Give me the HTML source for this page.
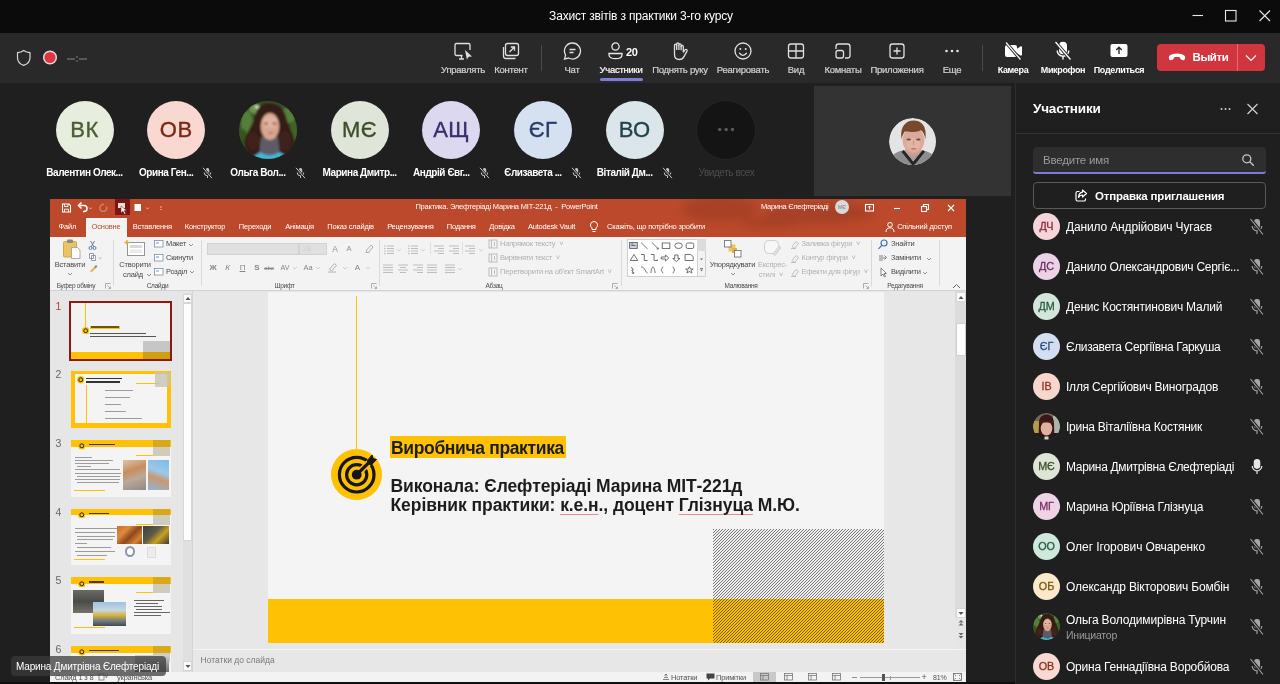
<!DOCTYPE html>
<html lang="ru">
<head>
<meta charset="utf-8">
<title>Захист звітів з практики 3-го курсу</title>
<style>
*{box-sizing:border-box;margin:0;padding:0}
html,body{width:1280px;height:684px;overflow:hidden;background:#1f1f1f;font-family:"Liberation Sans",sans-serif;color:#fff}
.abs{position:absolute}
body{opacity:.9999}
#titlebar{left:0;top:0;width:1280px;height:33px;background:#0b0b0b}
#titlebar .t{position:absolute;left:1px;width:1280px;top:9px;text-align:center;font-size:12px;color:#fff;letter-spacing:-0.180px}
#toolbar{left:0;top:33px;width:1280px;height:50px;background:#292929}
.tb{position:absolute;top:0;width:0;height:50px;text-align:center;font-size:9.500px;color:#d2d2d2;white-space:nowrap;letter-spacing:-0.250px}
.tb span{position:absolute;left:-40px;right:-40px;top:30.500px;text-align:center;-webkit-text-stroke:.2px}
.tb svg{position:absolute;left:50%;top:7px;margin-left:-11px}
.tb.w{color:#fff;font-weight:bold;font-size:9px;letter-spacing:-0.350px}
.tb.w span{top:31.500px;-webkit-text-stroke:0}
#strip{left:0;top:83px;width:1015px;height:116px;background:#1f1f1f}
.av{position:absolute;top:17.500px;width:58px;height:58px;border-radius:50%;text-align:center;line-height:58px;font-size:22px;letter-spacing:.5px;-webkit-text-stroke:.35px}
.nm{position:absolute;top:82px;width:120px;height:16px;line-height:16px;text-align:center;font-size:10px;color:#fff;white-space:nowrap;letter-spacing:-0.430px}
.nm .m{display:inline-block;vertical-align:middle;margin-left:9px;margin-top:-1px}
#panel{left:1015px;top:83px;width:265px;height:601px;background:#1f1f1f;border-left:1px solid #2e2e2e}
.row{position:absolute;left:0;width:265px;height:40px}
.row .a{position:absolute;left:17px;top:6.500px;width:27px;height:27px;border-radius:50%;font-size:10.800px;line-height:27px;text-align:center;letter-spacing:-0.100px;-webkit-text-stroke:.3px}
.row .n{position:absolute;left:50px;font-size:12px;color:#fff;white-space:nowrap;letter-spacing:-0.170px}
.row>svg{position:absolute;left:233px;top:11px}
#ppt{left:50px;top:199px;width:916px;height:483px;background:#e6e6e6;overflow:hidden;font-size:9px;color:#444}
#ppt .t{white-space:nowrap;line-height:14px;height:14px}
#ppt .c{text-align:center}
.th i{position:absolute;display:block}
.st{font-size:17.500px;font-weight:bold;color:#1c1c1c;white-space:nowrap;letter-spacing:-0.070px;line-height:20px}
.st u{text-decoration:underline;text-decoration-color:#e88c8c;text-decoration-thickness:.8px;text-underline-offset:2.500px}
</style>
</head>
<body>
<div id="titlebar" class="abs"><div class="t">Захист звітів з практики 3-го курсу</div></div>
<!-- window controls -->
<svg class="abs" style="left:1180px;top:0" width="100" height="33" viewBox="0 0 100 33" fill="none" stroke="#e8e8e8" stroke-width="1.1">
<path d="M12.5 15.5h10.5"/><rect x="45.5" y="10.5" width="10.5" height="10.5"/><path d="M79.5 10.5l10.5 10.5M90 10.5l-10.5 10.5"/></svg>
<div id="toolbar" class="abs">
<svg class="abs" style="left:14px;top:14px" width="80" height="22" viewBox="0 0 80 22" fill="none">
<path d="M9.7 3.6c2 1.4 4 2 6.3 2.1v5c0 3.600-2.300 6.300-6.300 7.700C5.800 17 3.500 14.300 3.500 10.700v-5c2.300-.1 4.300-.7 6.200-2.100z" stroke="#d8d8d8" stroke-width="1.200"/>
<circle cx="36" cy="10.500" r="6.300" fill="#e0353f" stroke="#dcdcdc" stroke-width="1.500"/>
<path d="M53 12h8M65 12h8" stroke="#8a8a8a" stroke-width="1.200"/><circle cx="63" cy="10" r=".8" fill="#8a8a8a"/><circle cx="63" cy="14" r=".8" fill="#8a8a8a"/>
</svg>
<div class="tb" style="left:463px"><svg width="22" height="22" viewBox="0 0 22 22" fill="none" stroke="#e0e0e0" stroke-width="1.300"><path d="M10.500 15.500H4.500a1.500 1.500 0 0 1-1.500-1.500V5a1.500 1.500 0 0 1 1.500-1.500h12A1.500 1.500 0 0 1 18 5v5"/><path d="M7 19h5M9.500 15.500V19"/><path d="M13 10l7 6.500-3.300.2-1.800 2.800z" fill="#e0e0e0" stroke="none"/></svg><span>Управлять</span></div>
<div class="tb" style="left:511px"><svg width="22" height="22" viewBox="0 0 22 22" fill="none" stroke="#e0e0e0" stroke-width="1.300"><rect x="5.500" y="3.500" width="13" height="12" rx="2"/><path d="M3.500 7v9a2.500 2.500 0 0 0 2.500 2.500h9.500"/><path d="M9.500 12l5-5M10.800 7h3.700v3.700"/></svg><span>Контент</span></div>
<div class="abs" style="left:541px;top:12px;width:1px;height:26px;background:#4a4a4a"></div>
<div class="tb" style="left:572px"><svg width="22" height="22" viewBox="0 0 22 22" fill="none" stroke="#e0e0e0" stroke-width="1.300"><path d="M11.500 3a8 8 0 1 1-3.900 15l-4.100 1 1.100-3.900A8 8 0 0 1 11.500 3z"/><path d="M8.500 9.500h6M8.500 12.500h4"/></svg><span>Чат</span></div>
<div class="tb" style="left:621px;color:#fff"><svg style="margin-left:-15px" width="32" height="22" viewBox="0 0 32 22" fill="none" stroke="#e8e8e8" stroke-width="1.300"><circle cx="9.500" cy="6.500" r="3.600"/><path d="M3 13.500h13v1.200c0 2.500-2.800 4-6.500 4S3 17.200 3 14.700z"/><text x="20" y="15.500" font-size="11" font-weight="bold" fill="#fff" stroke="none" font-family="Liberation Sans, sans-serif">20</text></svg><span>Участники</span></div>
<div class="abs" style="left:600px;top:45px;width:43px;height:3px;background:#7b7fd9;border-radius:1.500px"></div>
<div class="tb" style="left:680px"><svg style="margin-left:-13px" width="22" height="22" viewBox="0 0 22 22" fill="none" stroke="#e0e0e0" stroke-width="1.300" stroke-linejoin="round"><path d="M7.500 11V5.200a1.100 1.100 0 0 1 2.200 0V4a1.100 1.100 0 0 1 2.200 0v1a1.100 1.100 0 0 1 2.200 0v1.500a1.100 1.100 0 0 1 2.200 0V12l1.700-2.200a1.200 1.200 0 0 1 2 1.300l-3 5.500c-1 1.900-2.500 2.900-4.700 2.900-3 0-4.800-2-4.800-5z"/><path d="M9.700 5v5M11.900 5v5M14.100 6v4.200"/></svg><span>Поднять руку</span></div>
<div class="tb" style="left:743px"><svg width="22" height="22" viewBox="0 0 22 22" fill="none" stroke="#e0e0e0" stroke-width="1.300"><circle cx="11" cy="11" r="8"/><path d="M7.500 13.200c1 1.500 2.100 2.100 3.500 2.100s2.500-.6 3.500-2.100" stroke-linecap="round"/><circle cx="8.300" cy="9" r="1" fill="#e0e0e0" stroke="none"/><circle cx="13.700" cy="9" r="1" fill="#e0e0e0" stroke="none"/></svg><span>Реагировать</span></div>
<div class="tb" style="left:796px"><svg width="22" height="22" viewBox="0 0 22 22" fill="none" stroke="#e0e0e0" stroke-width="1.300"><rect x="3.500" y="4" width="15" height="14" rx="2.500"/><path d="M11 4v14M3.500 11h15"/></svg><span>Вид</span></div>
<div class="tb" style="left:843px"><svg width="22" height="22" viewBox="0 0 22 22" fill="none" stroke="#e0e0e0" stroke-width="1.300"><path d="M4 9V6.500A2.500 2.500 0 0 1 6.500 4h9A2.500 2.500 0 0 1 18 6.500v9a2.500 2.500 0 0 1-2.500 2.500H13"/><rect x="4" y="10.500" width="7.500" height="7.500" rx="2"/></svg><span>Комнаты</span></div>
<div class="tb" style="left:897px"><svg width="22" height="22" viewBox="0 0 22 22" fill="none" stroke="#e0e0e0" stroke-width="1.300"><rect x="4" y="4" width="14" height="14" rx="2.500"/><path d="M11 7.500v7M7.500 11h7"/></svg><span>Приложения</span></div>
<div class="tb" style="left:952px"><svg width="22" height="22" viewBox="0 0 22 22" fill="#e0e0e0"><circle cx="5.500" cy="11" r="1.300"/><circle cx="11" cy="11" r="1.300"/><circle cx="16.500" cy="11" r="1.300"/></svg><span>Еще</span></div>
<div class="abs" style="left:982px;top:12px;width:1px;height:26px;background:#4a4a4a"></div>
<div class="tb w" style="left:1013px"><svg width="22" height="22" viewBox="0 0 22 22" fill="#fff"><path d="M3 7a2 2 0 0 1 2-2h8a2 2 0 0 1 2 2v1.800l3.400-2.300c.7-.4 1.600 0 1.600.9v7.200c0 .9-.9 1.300-1.600.9L15 13.200V15a2 2 0 0 1-2 2H5a2 2 0 0 1-2-2z"/><path d="M4 2.500l14.500 17" stroke="#292929" stroke-width="3"/><path d="M4 2.500l14.500 17" stroke="#fff" stroke-width="1.200"/></svg><span>Камера</span></div>
<div class="tb w" style="left:1063px"><svg width="22" height="22" viewBox="0 0 22 22" fill="none" stroke="#fff" stroke-width="1.400"><rect x="7.700" y="2.500" width="6.600" height="11" rx="3.300" fill="#fff"/><path d="M5.200 10.500a5.800 5.800 0 0 0 11.600 0M11 16.300v3.200"/><path d="M3.500 2l15 17.500" stroke="#292929" stroke-width="3.400"/><path d="M3.500 2l15 17.500" stroke="#fff" stroke-width="1.300"/></svg><span>Микрофон</span></div>
<div class="tb w" style="left:1119px"><svg width="22" height="22" viewBox="0 0 22 22"><rect x="2.500" y="4" width="17" height="13" rx="2" fill="#fff"/><path d="M11 14V7.500M8.200 10l2.800-2.800 2.800 2.800" fill="none" stroke="#292929" stroke-width="1.400"/></svg><span>Поделиться</span></div>
<div class="abs" style="left:1157px;top:11px;width:108px;height:27px;background:#d1363f;border-radius:4px">
<div class="abs" style="left:80px;top:0;width:1px;height:27px;background:#e26a70"></div>
<svg class="abs" style="left:11px;top:7px" width="18" height="13" viewBox="0 0 18 13" fill="#fff"><path d="M9 2.500c-3.500 0-6.500 1-7.800 2.600-.5.700-.5 1.600-.2 2.500l.3.900c.2.600.9.900 1.500.7l2-.6c.6-.2 1-.7 1-1.300V6.500c1-.4 2-.5 3.200-.5s2.200.1 3.200.5v.8c0 .6.400 1.100 1 1.300l2 .6c.6.200 1.300-.1 1.500-.7l.3-.9c.3-.9.300-1.800-.2-2.500C15.500 3.500 12.500 2.500 9 2.500z"/></svg>
<div class="abs" style="left:35.500px;top:6.500px;font-size:11.500px;font-weight:bold;color:#fff;letter-spacing:-0.400px">Выйти</div>
<svg class="abs" style="left:87px;top:8px" width="14" height="12" viewBox="0 0 14 12" fill="none" stroke="#fff" stroke-width="1.200"><path d="M2 3.500l5 5 5-5"/></svg>
</div>
</div>
<div id="strip" class="abs">
<div class="av" style="left:55.5px;background:#e7eedd;color:#4a5e31">ВК</div>
<div class="nm" style="left:24.5px"><b>Валентин Олек...</b></div>
<div class="av" style="left:147.2px;background:#f8d8d0;color:#7c2712">ОВ</div>
<div class="nm" style="left:116.2px"><b>Орина Ген...</b><svg class="m" width="11" height="12" viewBox="0 0 11 12" fill="none" stroke="#c8c8c8" stroke-width="1"><rect x="3.800" y="1" width="3.400" height="6" rx="1.700" fill="#c8c8c8" stroke="none"/><path d="M2.200 5.500a3.300 3.300 0 0 0 6.600 0M5.500 9v2"/><path d="M1 .8l9 10.400" stroke="#1f1f1f" stroke-width="2.400"/><path d="M1 .8l9 10.400"/></svg></div>
<div class="av" id="ph1" style="left:238.9px"><svg width="100%" height="100%" viewBox="0 0 58 58" style="display:block"><defs><filter id="bl1" x="-20%" y="-20%" width="140%" height="140%"><feGaussianBlur stdDeviation=".8"/></filter><clipPath id="cc1"><circle cx="29" cy="29" r="29"/></clipPath></defs><g clip-path="url(#cc1)"><rect width="58" height="58" fill="#38532a"/><g filter="url(#bl1)"><ellipse cx="8" cy="22" rx="6" ry="12" fill="#557f38"/><ellipse cx="16" cy="8" rx="6" ry="5" fill="#6f9650"/><ellipse cx="18" cy="6" rx="2" ry="2" fill="#cfe0c0"/><ellipse cx="4" cy="36" rx="4" ry="8" fill="#35551f"/><ellipse cx="50" cy="14" rx="7" ry="8" fill="#55803a"/><ellipse cx="55" cy="30" rx="4" ry="10" fill="#3f6327"/><path d="M30 2c-8 0-12 5-14 13-2 8-7 14-10 23-2 7 2 15 8 18h31c7-3 12-10 10-18-2-9-6-14-8-22C45 7 38 2 30 2z" fill="#341b13"/><ellipse cx="14" cy="40" rx="6" ry="9" fill="#41241a"/><ellipse cx="46" cy="40" rx="6" ry="10" fill="#41231a"/><path d="M22 36h17l2 18H20z" fill="#5d5c66"/><path d="M13 59c2-5 7-7.500 9.500-7.500 3 3.500 13 3.500 16.500 0 4 0 8 2.500 9.500 7.500z" fill="#3fb7d4"/><ellipse cx="31" cy="25.500" rx="9.300" ry="13.500" fill="#d9a590"/><ellipse cx="31" cy="21" rx="8" ry="6" fill="#e2b39f"/><ellipse cx="27" cy="22.500" rx="2" ry=".9" fill="#6b4034"/><ellipse cx="35.500" cy="22.500" rx="2" ry=".9" fill="#6b4034"/><ellipse cx="31.500" cy="32" rx="2.500" ry="1" fill="#b8705f"/></g></g></svg></div>
<div class="nm" style="left:207.9px"><b>Ольга Вол...</b><svg class="m" width="11" height="12" viewBox="0 0 11 12" fill="none" stroke="#c8c8c8" stroke-width="1"><rect x="3.800" y="1" width="3.400" height="6" rx="1.700" fill="#c8c8c8" stroke="none"/><path d="M2.200 5.500a3.300 3.300 0 0 0 6.600 0M5.500 9v2"/><path d="M1 .8l9 10.400" stroke="#1f1f1f" stroke-width="2.400"/><path d="M1 .8l9 10.400"/></svg></div>
<div class="av" style="left:330.6px;background:#dfe5d8;color:#3b4f28">МЄ</div>
<div class="nm" style="left:299.6px"><b>Марина Дмитр...</b></div>
<div class="av" style="left:422.3px;background:#dcd8ef;color:#38306e">АЩ</div>
<div class="nm" style="left:391.3px"><b>Андрій Євг...</b><svg class="m" width="11" height="12" viewBox="0 0 11 12" fill="none" stroke="#c8c8c8" stroke-width="1"><rect x="3.800" y="1" width="3.400" height="6" rx="1.700" fill="#c8c8c8" stroke="none"/><path d="M2.200 5.500a3.300 3.300 0 0 0 6.600 0M5.500 9v2"/><path d="M1 .8l9 10.400" stroke="#1f1f1f" stroke-width="2.400"/><path d="M1 .8l9 10.400"/></svg></div>
<div class="av" style="left:514.0px;background:#d5e0f0;color:#253d69">ЄГ</div>
<div class="nm" style="left:483.0px"><b>Єлизавета ...</b><svg class="m" width="11" height="12" viewBox="0 0 11 12" fill="none" stroke="#c8c8c8" stroke-width="1"><rect x="3.800" y="1" width="3.400" height="6" rx="1.700" fill="#c8c8c8" stroke="none"/><path d="M2.200 5.500a3.300 3.300 0 0 0 6.600 0M5.500 9v2"/><path d="M1 .8l9 10.400" stroke="#1f1f1f" stroke-width="2.400"/><path d="M1 .8l9 10.400"/></svg></div>
<div class="av" style="left:605.7px;background:#dbe6ea;color:#23424d">ВО</div>
<div class="nm" style="left:574.7px"><b>Віталій Дм...</b><svg class="m" width="11" height="12" viewBox="0 0 11 12" fill="none" stroke="#c8c8c8" stroke-width="1"><rect x="3.800" y="1" width="3.400" height="6" rx="1.700" fill="#c8c8c8" stroke="none"/><path d="M2.200 5.500a3.300 3.300 0 0 0 6.600 0M5.500 9v2"/><path d="M1 .8l9 10.400" stroke="#1f1f1f" stroke-width="2.400"/><path d="M1 .8l9 10.400"/></svg></div>
<div class="av" style="left:697.4px;background:#141414;box-shadow:0 0 0 1px #262626;color:#5e5e5e;font-size:11px;letter-spacing:2.500px;line-height:57px;text-indent:2px">•••</div>
<div class="nm" style="left:666.4px;color:#4d4d4d;font-weight:normal">Увидеть всех</div>
<div class="abs" style="left:814px;top:2.500px;width:197px;height:110px;background:#333"></div>
<div class="abs" id="ph2" style="left:888.500px;top:34.500px;width:47.500px;height:47.500px;border-radius:50%;overflow:hidden"><svg width="100%" height="100%" viewBox="0 0 47 47" style="display:block"><defs><filter id="bl2" x="-20%" y="-20%" width="140%" height="140%"><feGaussianBlur stdDeviation=".65"/></filter><clipPath id="cc2"><circle cx="23.500" cy="23.500" r="23.500"/></clipPath></defs><g clip-path="url(#cc2)"><rect width="47" height="47" fill="#e4e4e4"/><g filter="url(#bl2)"><path d="M-2 50c0-10 6-15 14-17.500h23c9 2.500 14 7.500 14 17.500z" fill="#8b8d8f"/><path d="M16 30h16v8l-8 5-8-5z" fill="#cf9d8d"/><path d="M13.500 32.500l10.500 13 10.500-13" fill="none" stroke="#24262b" stroke-width="3"/><path d="M19 36l5 7 5-7-5 2z" fill="#9ea0a3"/><ellipse cx="24.200" cy="22" rx="10.800" ry="12.500" fill="#dcaa9a"/><ellipse cx="24.200" cy="26" rx="7" ry="6" fill="#e2b4a4"/><path d="M12.300 21C10.500 8 17 2.500 24.500 2.500S38 8 36 21c-.8-5-2.500-8-4.500-9-5 2.500-13 2-15.500 1.200-2 2-3 5-3.700 7.800z" fill="#794a2f"/><ellipse cx="19.500" cy="21.300" rx="2.200" ry=".9" fill="#6d4a40"/><ellipse cx="29" cy="21.300" rx="2.200" ry=".9" fill="#6d4a40"/><ellipse cx="24.300" cy="30.500" rx="3" ry=".8" fill="#b5786c"/><path d="M24.300 22v5" stroke="#c99585" stroke-width="1.200"/></g></g></svg></div>
</div>
<div id="ppt" class="abs">
<div class="abs" style="left:0px;top:0px;width:916px;height:37.5px;background:#bc492b"></div>
<svg class="abs" style="left:620px;top:0" width="240" height="37" viewBox="0 0 240 37"><defs><filter id="cl" x="-20%" y="-50%" width="140%" height="200%"><feGaussianBlur stdDeviation="4"/></filter></defs><g filter="url(#cl)" fill="#000" opacity=".1"><ellipse cx="50" cy="10" rx="38" ry="13"/><ellipse cx="150" cy="14" rx="55" ry="11"/><ellipse cx="100" cy="24" rx="30" ry="6"/></g></svg>
<div class="abs" style="left:64.6px;top:0px;width:15.4px;height:16px;background:#7a1710"></div>
<svg class="abs" style="left:10px;top:.5px" width="110" height="16" viewBox="0 0 110 16" fill="none" stroke="#fff" stroke-width="1.100"><path d="M2.500 4h6.500l1.500 1.500v6.500h-8z"/><path d="M4.500 4v2.500h3.500v-2.500M4.500 12v-2.800h4v2.800" stroke-width=".9"/><path d="M20 5.500h4a3 3 0 0 1 0 6h-1" stroke-width="1.500"/><path d="M21.500 2.500l-3 3 3 3" stroke-width="1.500"/><path d="M29 7.500l1.500 1.500 1.500-1.500" stroke-width=".8" opacity=".7"/><path d="M44 4.500a3.500 3.500 0 1 0 2.500 2" opacity=".35" stroke-width="1.300"/><rect x="58" y="3" width="7" height="5" fill="#fff" stroke="none" opacity=".85"/><path d="M61 6l0 7 2-1.800 1.500 3 1.200-.6-1.500-3h2.600z" fill="#fff" stroke="#7d1d12" stroke-width=".5"/><rect x="74.500" y="4" width="6.500" height="7" fill="#fff" stroke="none"/><path d="M86 7.500l1.500 1.500 1.500-1.500" stroke-width=".8" opacity=".7"/><path d="M100 7h2M100.500 9l.5.800.5-.8" stroke-width=".8" opacity=".8"/></svg>
<div class="abs t c" style="left:356.5px;top:1px;width:200px;color:#fff;font-size:7.500px;letter-spacing:-0.200px">Практика. Элефтеріаді Марина МІТ-221д&nbsp; -&nbsp; PowerPoint</div>
<div class="abs t" style="left:711px;top:1px;color:#fff;font-size:7.500px;letter-spacing:-0.300px">Марина Єлефтеріаді</div>
<div class="abs" style="left:785px;top:1px;width:14px;height:14px;border-radius:50%;background:#d9d9d9;color:#777;font-size:5px;line-height:14px;text-align:center">МЄ</div>
<svg class="abs" style="left:812px;top:2px" width="100" height="14" viewBox="0 0 100 14" fill="none" stroke="#fff" stroke-width="1.100"><rect x="3.500" y="3.500" width="8" height="6.500"/><path d="M7.500 8.500v-3.500M6 6.500l1.500-1.500 1.500 1.500" stroke-width=".9"/><path d="M32 7.500h6"/><rect x="59.500" y="5.500" width="5" height="5"/><path d="M61.500 5.500v-2h5v5h-2"/><path d="M86 4l6 6M92 4l-6 6"/></svg>
<div class="abs" style="left:36.2px;top:19.3px;width:40.5px;height:19px;background:#f3f3f3"></div>
<div class="abs t c" style="left:-82.7px;top:21.3px;width:200px;color:#fff;font-size:7.500px;letter-spacing:-0.200px">Файл</div>
<div class="abs t c" style="left:-44px;top:21.3px;width:200px;color:#bc492b;font-size:7.500px;letter-spacing:-0.200px">Основне</div>
<div class="abs t c" style="left:2.3px;top:21.3px;width:200px;color:#fff;font-size:7.500px;letter-spacing:-0.200px">Вставлення</div>
<div class="abs t c" style="left:55px;top:21.3px;width:200px;color:#fff;font-size:7.500px;letter-spacing:-0.200px">Конструктор</div>
<div class="abs t c" style="left:105px;top:21.3px;width:200px;color:#fff;font-size:7.500px;letter-spacing:-0.200px">Переходи</div>
<div class="abs t c" style="left:149.5px;top:21.3px;width:200px;color:#fff;font-size:7.500px;letter-spacing:-0.200px">Анімація</div>
<div class="abs t c" style="left:200.6px;top:21.3px;width:200px;color:#fff;font-size:7.500px;letter-spacing:-0.200px">Показ слайдів</div>
<div class="abs t c" style="left:260.4px;top:21.3px;width:200px;color:#fff;font-size:7.500px;letter-spacing:-0.200px">Рецензування</div>
<div class="abs t c" style="left:311.3px;top:21.3px;width:200px;color:#fff;font-size:7.500px;letter-spacing:-0.200px">Подання</div>
<div class="abs t c" style="left:352px;top:21.3px;width:200px;color:#fff;font-size:7.500px;letter-spacing:-0.200px">Довідка</div>
<div class="abs t c" style="left:401.5px;top:21.3px;width:200px;color:#fff;font-size:7.500px;letter-spacing:-0.200px">Autodesk Vault</div>
<div class="abs t c" style="left:506px;top:21.3px;width:200px;color:#fff;font-size:7.500px;letter-spacing:-0.200px">Скажіть, що потрібно зробити</div>
<div class="abs t c" style="left:774.5px;top:21.3px;width:200px;color:#fff;font-size:7.500px;letter-spacing:-0.200px">Спільний доступ</div>
<svg class="abs" style="left:538px;top:21px" width="12" height="14" viewBox="0 0 12 14" fill="none" stroke="#fff" stroke-width="1"><path d="M6 1.500a3.500 3.500 0 0 1 2 6.400V9.500H4V7.900a3.500 3.500 0 0 1 2-6.400zM4.500 11.500h3"/></svg>
<svg class="abs" style="left:834px;top:22px" width="12" height="12" viewBox="0 0 12 12" fill="none" stroke="#fff" stroke-width="1"><circle cx="6" cy="3.800" r="2.300"/><path d="M2 11c0-3 1.500-4.200 4-4.200s4 1.200 4 4.200"/></svg>
<div class="abs" style="left:0px;top:37.5px;width:916px;height:54px;background:#f3f3f3;border-bottom:1px solid #d2d2d2"></div>
<div class="abs" style="left:63px;top:41px;width:1px;height:46px;background:#dadada"></div>
<div class="abs" style="left:151px;top:41px;width:1px;height:46px;background:#dadada"></div>
<div class="abs" style="left:329px;top:41px;width:1px;height:46px;background:#dadada"></div>
<div class="abs" style="left:571px;top:41px;width:1px;height:46px;background:#dadada"></div>
<div class="abs" style="left:821px;top:41px;width:1px;height:46px;background:#dadada"></div>
<div class="abs" style="left:889px;top:41px;width:1px;height:46px;background:#dadada"></div>
<div class="abs t c" style="left:-74px;top:80.2px;width:200px;color:#4a4a4a;font-size:6.500px;letter-spacing:-0.250px">Буфер обміну</div>
<div class="abs t c" style="left:7.5px;top:80.2px;width:200px;color:#4a4a4a;font-size:6.500px;letter-spacing:-0.250px">Слайди</div>
<div class="abs t c" style="left:134.5px;top:80.2px;width:200px;color:#4a4a4a;font-size:6.500px;letter-spacing:-0.250px">Шрифт</div>
<div class="abs t c" style="left:344px;top:80.2px;width:200px;color:#4a4a4a;font-size:6.500px;letter-spacing:-0.250px">Абзац</div>
<div class="abs t c" style="left:591px;top:80.2px;width:200px;color:#4a4a4a;font-size:6.500px;letter-spacing:-0.250px">Малювання</div>
<div class="abs t c" style="left:755px;top:80.2px;width:200px;color:#4a4a4a;font-size:6.500px;letter-spacing:-0.250px">Редагування</div>
<svg class="abs" style="left:55px;top:84px" width="6" height="6" viewBox="0 0 6 6" fill="none" stroke="#9a9a9a" stroke-width=".8"><path d="M.5 .5h-0v5M.5.500h5M2.500 2.500l3 3M5.500 3.500v2h-2"/></svg>
<svg class="abs" style="left:321px;top:84px" width="6" height="6" viewBox="0 0 6 6" fill="none" stroke="#9a9a9a" stroke-width=".8"><path d="M.5 .5h-0v5M.5.500h5M2.500 2.500l3 3M5.500 3.500v2h-2"/></svg>
<svg class="abs" style="left:562px;top:84px" width="6" height="6" viewBox="0 0 6 6" fill="none" stroke="#9a9a9a" stroke-width=".8"><path d="M.5 .5h-0v5M.5.500h5M2.500 2.500l3 3M5.500 3.500v2h-2"/></svg>
<svg class="abs" style="left:813px;top:84px" width="6" height="6" viewBox="0 0 6 6" fill="none" stroke="#9a9a9a" stroke-width=".8"><path d="M.5 .5h-0v5M.5.500h5M2.500 2.500l3 3M5.500 3.500v2h-2"/></svg>
<svg class="abs" style="left:10px;top:39px" width="44" height="40" viewBox="0 0 44 40" fill="none"><rect x="3.500" y="3.500" width="13" height="15.500" rx="1" fill="#ecc263" stroke="#d9a441"/><rect x="7" y="1.500" width="6" height="3.500" rx="1" fill="#8a8a8a"/><path d="M11.500 9.500h6l2.500 2.500v8.500h-8.500z" fill="#fff" stroke="#9a9a9a" stroke-width=".8"/><g stroke="#5b7fa8" stroke-width="1"><circle cx="30.500" cy="10" r="1.500"/><circle cx="34.500" cy="10" r="1.500"/><path d="M30.500 3l3.500 6M34.500 3l-3.500 6"/></g><path d="M29.500 15.500h4v5h-4zM31.500 17.500h4v5h-4z" fill="#fff" stroke="#7a8a9a" stroke-width=".8"/><path d="M39 19.500l1.200 1.200 1.200-1.200" stroke="#888" stroke-width=".7"/><path d="M30 33l4-4 1.500 1.500-4 4z" fill="#e6b94a"/><path d="M34 29l2-2 1.500 1.500-2 2z" fill="#888"/></svg>
<div class="abs t c" style="left:-80px;top:58.7px;width:200px;color:#4a4a4a;font-size:7.500px;letter-spacing:-0.200px">Вставити</div>
<svg class="abs" style="left:17px;top:73px" width="6" height="4" viewBox="0 0 6 4" fill="none" stroke="#777" stroke-width=".8"><path d="M1 1l2 2 2-2"/></svg>
<svg class="abs" style="left:74px;top:40px" width="24" height="20" viewBox="0 0 24 20" fill="none"><rect x="3.500" y="3.500" width="17" height="13" fill="#fff" stroke="#8a8a8a" stroke-width=".9"/><rect x="6" y="6" width="12" height="3" fill="#d9d9d9"/><rect x="6" y="10.500" width="12" height="3.500" fill="#e9e9e9"/><path d="M3 1v5M.5 3.500h5" stroke="#e0a92e" stroke-width="1.300"/></svg>
<div class="abs t c" style="left:-15px;top:58.7px;width:200px;color:#4a4a4a;font-size:7.500px;letter-spacing:-0.200px">Створити</div>
<div class="abs t c" style="left:-17px;top:68.5px;width:200px;color:#4a4a4a;font-size:7.500px;letter-spacing:-0.200px">слайд</div>
<svg class="abs" style="left:96px;top:74px" width="6" height="4" viewBox="0 0 6 4" fill="none" stroke="#777" stroke-width=".8"><path d="M1 1l2 2 2-2"/></svg>
<svg class="abs" style="left:103px;top:40px" width="11" height="10" viewBox="0 0 11 10" fill="none"><rect x="1.500" y="1.500" width="8.500" height="6.500" fill="#fff" stroke="#7a8fa8" stroke-width=".8"/><rect x="3" y="3" width="3" height="2" fill="#b9c8da"/></svg>
<div class="abs t" style="left:116px;top:38px;color:#4a4a4a;font-size:7.500px;letter-spacing:-0.200px">Макет</div>
<svg class="abs" style="left:103px;top:54px" width="11" height="10" viewBox="0 0 11 10" fill="none"><rect x="1.500" y="1.500" width="8.500" height="6.500" fill="#fff" stroke="#7a8fa8" stroke-width=".8"/><rect x="3" y="3" width="3" height="2" fill="#b9c8da"/></svg>
<div class="abs t" style="left:116px;top:52px;color:#4a4a4a;font-size:7.500px;letter-spacing:-0.200px">Скинути</div>
<svg class="abs" style="left:103px;top:67.69999999999999px" width="11" height="10" viewBox="0 0 11 10" fill="none"><rect x="1.500" y="1.500" width="8.500" height="6.500" fill="#fff" stroke="#7a8fa8" stroke-width=".8"/><rect x="3" y="3" width="3" height="2" fill="#b9c8da"/></svg>
<div class="abs t" style="left:116px;top:65.7px;color:#4a4a4a;font-size:7.500px;letter-spacing:-0.200px">Розділ</div>
<svg class="abs" style="left:138px;top:43.5px" width="6" height="4" viewBox="0 0 6 4" fill="none" stroke="#777" stroke-width=".8"><path d="M1 1l2 2 2-2"/></svg>
<svg class="abs" style="left:138.5px;top:71px" width="6" height="4" viewBox="0 0 6 4" fill="none" stroke="#777" stroke-width=".8"><path d="M1 1l2 2 2-2"/></svg>
<div class="abs" style="left:157px;top:43.5px;width:92px;height:12.5px;background:#e0e0e0;border:1px solid #d2d2d2"></div>
<div class="abs" style="left:249px;top:43.5px;width:27.5px;height:12.5px;background:#e0e0e0;border:1px solid #d2d2d2"></div>
<div class="abs t" style="left:253px;top:43px;color:#cfcfcf;font-size:7px">28</div>
<div class="abs t c" style="left:185px;top:42.5px;width:200px;color:#909090;font-size:8.500px">A</div>
<div class="abs t c" style="left:199px;top:43px;width:200px;color:#909090;font-size:7.500px">A</div>
<svg class="abs" style="left:314px;top:44px" width="11" height="11" viewBox="0 0 11 11" fill="none" stroke="#b0b0b0" stroke-width="1"><path d="M2 8l5-6 2 2-5 6zM1.500 9.500h4"/></svg>
<div class="abs t c" style="left:63px;top:61.5px;width:200px;color:#858585;font-size:8px;font-weight:bold">Ж</div>
<div class="abs t c" style="left:77.5px;top:61.5px;width:200px;color:#858585;font-size:8px;font-style:italic">К</div>
<div class="abs t c" style="left:92.5px;top:61.5px;width:200px;color:#858585;font-size:8px;text-decoration:underline">П</div>
<div class="abs t c" style="left:107px;top:61.5px;width:200px;color:#858585;font-size:8px;font-weight:bold">S</div>
<div class="abs t c" style="left:119px;top:61.5px;width:200px;color:#858585;font-size:8px;font-size:6px;text-decoration:line-through">abc</div>
<div class="abs t c" style="left:135px;top:61.5px;width:200px;color:#858585;font-size:8px;font-size:7px">AV</div>
<div class="abs t c" style="left:158px;top:61.5px;width:200px;color:#858585;font-size:8px;font-size:7.500px">Aa</div>
<div class="abs t c" style="left:207.5px;top:61.5px;width:200px;color:#858585;font-size:8px;">A</div>
<svg class="abs" style="left:277px;top:63px" width="12" height="11" viewBox="0 0 12 11" fill="none" stroke="#b0b0b0" stroke-width="1"><path d="M2.500 7l5-5.500 2 2-5 5.500zM1 10h8"/></svg>
<svg class="abs" style="left:242px;top:67px" width="6" height="4" viewBox="0 0 6 4" fill="none" stroke="#c4c4c4" stroke-width=".8"><path d="M1 1l2 2 2-2"/></svg>
<svg class="abs" style="left:264.5px;top:67px" width="6" height="4" viewBox="0 0 6 4" fill="none" stroke="#c4c4c4" stroke-width=".8"><path d="M1 1l2 2 2-2"/></svg>
<svg class="abs" style="left:292px;top:67px" width="6" height="4" viewBox="0 0 6 4" fill="none" stroke="#c4c4c4" stroke-width=".8"><path d="M1 1l2 2 2-2"/></svg>
<svg class="abs" style="left:315px;top:67px" width="6" height="4" viewBox="0 0 6 4" fill="none" stroke="#c4c4c4" stroke-width=".8"><path d="M1 1l2 2 2-2"/></svg>
<svg class="abs" style="left:334px;top:45.7px" width="11" height="10" viewBox="0 0 11 10" fill="none" stroke="#bdbdbd" stroke-width="1"><path d="M3 1.0h7M3 3.5h7M3 6.0h7M3 8.5h7"/></svg>
<svg class="abs" style="left:334px;top:45.69999999999999px" width="3" height="10" viewBox="0 0 3 10" fill="#bdbdbd"><rect y=".5" width="1.500" height="1.200"/><rect y="3" width="1.500" height="1.200"/><rect y="5.500" width="1.500" height="1.200"/><rect y="8" width="1.500" height="1.200"/></svg>
<svg class="abs" style="left:357.5px;top:45.7px" width="11" height="10" viewBox="0 0 11 10" fill="none" stroke="#bdbdbd" stroke-width="1"><path d="M3 1.0h7M3 3.5h7M3 6.0h7M3 8.5h7"/></svg>
<svg class="abs" style="left:357.5px;top:45.69999999999999px" width="3" height="10" viewBox="0 0 3 10" fill="#bdbdbd"><rect y=".5" width="1.500" height="1.200"/><rect y="3" width="1.500" height="1.200"/><rect y="5.500" width="1.500" height="1.200"/><rect y="8" width="1.500" height="1.200"/></svg>
<svg class="abs" style="left:383.7px;top:45.7px" width="11" height="10" viewBox="0 0 11 10" fill="none" stroke="#bdbdbd" stroke-width="1"><path d="M0 1.0h10M4 3.5h6M0 6.0h10M4 8.5h6"/></svg>
<svg class="abs" style="left:398.7px;top:45.7px" width="11" height="10" viewBox="0 0 11 10" fill="none" stroke="#bdbdbd" stroke-width="1"><path d="M0 1.0h10M4 3.5h6M0 6.0h10M4 8.5h6"/></svg>
<svg class="abs" style="left:415px;top:45.7px" width="11" height="10" viewBox="0 0 11 10" fill="none" stroke="#bdbdbd" stroke-width="1"><path d="M0 1.0h10M4 3.5h6M0 6.0h10M4 8.5h6"/></svg>
<svg class="abs" style="left:333px;top:64.5px" width="11" height="10" viewBox="0 0 11 10" fill="none" stroke="#bdbdbd" stroke-width="1"><path d="M0 1.0h10M0 3.5h10M0 6.0h10M0 8.5h10"/></svg>
<svg class="abs" style="left:348px;top:64.5px" width="11" height="10" viewBox="0 0 11 10" fill="none" stroke="#bdbdbd" stroke-width="1"><path d="M0 1.0h10M2 3.5h6M0 6.0h10M2 8.5h6"/></svg>
<svg class="abs" style="left:363px;top:64.5px" width="11" height="10" viewBox="0 0 11 10" fill="none" stroke="#bdbdbd" stroke-width="1"><path d="M0 1.0h10M4 3.5h6M0 6.0h10M4 8.5h6"/></svg>
<svg class="abs" style="left:377px;top:64.5px" width="11" height="10" viewBox="0 0 11 10" fill="none" stroke="#bdbdbd" stroke-width="1"><path d="M0 1.0h10M0 3.5h10M0 6.0h10M0 8.5h10"/></svg>
<svg class="abs" style="left:395px;top:64.5px" width="11" height="10" viewBox="0 0 11 10" fill="none" stroke="#bdbdbd" stroke-width="1"><path d="M0 1.0h10M0 3.5h10M0 6.0h10M0 8.5h10"/></svg>
<svg class="abs" style="left:346px;top:49px" width="6" height="4" viewBox="0 0 6 4" fill="none" stroke="#c8c8c8" stroke-width=".8"><path d="M1 1l2 2 2-2"/></svg>
<svg class="abs" style="left:370px;top:49px" width="6" height="4" viewBox="0 0 6 4" fill="none" stroke="#c8c8c8" stroke-width=".8"><path d="M1 1l2 2 2-2"/></svg>
<svg class="abs" style="left:428px;top:49px" width="6" height="4" viewBox="0 0 6 4" fill="none" stroke="#c8c8c8" stroke-width=".8"><path d="M1 1l2 2 2-2"/></svg>
<svg class="abs" style="left:407px;top:68px" width="6" height="4" viewBox="0 0 6 4" fill="none" stroke="#c8c8c8" stroke-width=".8"><path d="M1 1l2 2 2-2"/></svg>
<div class="abs" style="left:380px;top:43px;width:1px;height:12px;background:#dedede"></div>
<div class="abs" style="left:411.5px;top:43px;width:1px;height:12px;background:#dedede"></div>
<svg class="abs" style="left:438px;top:40px" width="10" height="10" viewBox="0 0 10 10" fill="none" stroke="#b8b8b8" stroke-width=".9"><rect x="1" y="1" width="8" height="8"/><path d="M3.500 1v8M6.500 3v4"/></svg>
<div class="abs t" style="left:450px;top:38px;color:#b0b0b0;font-size:7.500px;letter-spacing:-0.200px">Напрямок тексту&nbsp; ˅</div>
<svg class="abs" style="left:438px;top:54px" width="10" height="10" viewBox="0 0 10 10" fill="none" stroke="#b8b8b8" stroke-width=".9"><rect x="1" y="1" width="8" height="8"/><path d="M3.500 1v8M6.500 3v4"/></svg>
<div class="abs t" style="left:450px;top:52px;color:#b0b0b0;font-size:7.500px;letter-spacing:-0.200px">Вирівняти текст&nbsp; ˅</div>
<svg class="abs" style="left:438px;top:68px" width="10" height="10" viewBox="0 0 10 10" fill="none" stroke="#b8b8b8" stroke-width=".9"><rect x="1" y="1" width="8" height="8"/><path d="M3.500 1v8M6.500 3v4"/></svg>
<div class="abs t" style="left:450px;top:66px;color:#b0b0b0;font-size:7.500px;letter-spacing:-0.200px">Перетворити на об'єкт SmartArt&nbsp; ˅</div>
<div class="abs" style="left:577px;top:40px;width:78.5px;height:37.5px;background:#fff;border:1px solid #d0d0d0"></div>
<div class="abs" style="left:647px;top:40px;width:8.5px;height:37.5px;background:#f3f3f3;border:1px solid #d0d0d0"></div>
<div class="abs" style="left:647px;top:40px;width:8.5px;height:12px;background:#dcdcdc"></div>
<svg class="abs" style="left:578px;top:41px" width="75" height="36" viewBox="0 0 69 36" preserveAspectRatio="none" fill="none" stroke="#555" stroke-width=".8"><rect x="1.500" y="2.500" width="7" height="6" fill="#c9d6e6"/><path d="M3 4h2M3 5.500h4"/><path d="M12 2.500l6 6.500M22 2.500l6 6.500M27.800 7.500v1.500h-1.500"/><rect x="31.500" y="3" width="7" height="5.500"/><ellipse cx="46.500" cy="5.700" rx="3.500" ry="2.800"/><rect x="53.500" y="3" width="7" height="5.500" rx="1.500"/><path d="M2 20.500l3.500-6 3.500 6zM12 14.500h3v6h3M21 14.500h3v6h3M27 19.500v1.500M30.500 17h4v-2l3 3-3 3v-2h-4zM43 15h3v3.500h1.800l-3.300 3-3.300-3H43zM52.500 14.500h5l2.500 2v4h-7.500z"/><path d="M3 27l2 3h-1.500l1.500 3.500M5 33.500l-1.500-.5M5 33.500l.5-1.500M12 27c4 0 4 6 6 6M21 33c1-8 3-8 4 0M32.500 27c-1.500 0-1 3-2.200 3 1.200 0 .7 3 2.200 3M41 27c1.500 0 1 3 2.200 3-1.200 0-.7 3-2.200 3M56.500 26.500l1 2.500h2.500l-2 1.500.8 2.500-2.300-1.500-2.300 1.500.8-2.500-2-1.500h2.500z"/></svg>
<svg class="abs" style="left:648px;top:53px" width="7" height="24" viewBox="0 0 7 24" fill="#666"><path d="M2 6.500h3l-1.500 1.800zM2 17.500h3l-1.500 1.800zM2 16h3v.8h-3z"/></svg>
<svg class="abs" style="left:672px;top:39px" width="22" height="22" viewBox="0 0 22 22" fill="none"><rect x="6.500" y="6.500" width="7" height="7" fill="#efc45c"/><rect x="10" y="10" width="5" height="5" fill="#e3b140"/><rect x="2.500" y="2.500" width="6.500" height="6.500" fill="#fff" stroke="#777" stroke-width=".9"/><rect x="12.500" y="12.500" width="6.500" height="6.500" fill="#fff" stroke="#777" stroke-width=".9"/></svg>
<div class="abs t c" style="left:582.5px;top:58.7px;width:200px;color:#4a4a4a;font-size:7.500px;letter-spacing:-0.200px">Упорядкувати</div>
<svg class="abs" style="left:679.5px;top:73px" width="6" height="4" viewBox="0 0 6 4" fill="none" stroke="#777" stroke-width=".8"><path d="M1 1l2 2 2-2"/></svg>
<svg class="abs" style="left:711px;top:39px" width="24" height="22" viewBox="0 0 24 22" fill="none" stroke="#cfcfcf" stroke-width="1"><rect x="3.500" y="2.500" width="14" height="13" rx="4" fill="#f7f7f7"/><path d="M12 16l6-8 2 1.500-6 8z" fill="#e2e2e2"/></svg>
<div class="abs t c" style="left:622.5px;top:58.7px;width:200px;color:#b0b0b0;font-size:7.500px;letter-spacing:-0.200px">Експрес-</div>
<div class="abs t c" style="left:621px;top:68.5px;width:200px;color:#b0b0b0;font-size:7.500px;letter-spacing:-0.200px">стилі&nbsp; ˅</div>
<svg class="abs" style="left:740px;top:40px" width="10" height="10" viewBox="0 0 10 10" fill="none" stroke="#b8b8b8" stroke-width=".9"><path d="M2 7.500l4-5 2.500 2-4 5zM1 9.500h5"/></svg>
<div class="abs t" style="left:751.5px;top:38px;color:#b0b0b0;font-size:7.500px;letter-spacing:-0.200px">Заливка фігури&nbsp; ˅</div>
<svg class="abs" style="left:740px;top:54px" width="10" height="10" viewBox="0 0 10 10" fill="none" stroke="#b8b8b8" stroke-width=".9"><path d="M2 7.500l4-5 2.500 2-4 5zM1 9.500h5"/></svg>
<div class="abs t" style="left:751.5px;top:52px;color:#b0b0b0;font-size:7.500px;letter-spacing:-0.200px">Контур фігури&nbsp; ˅</div>
<svg class="abs" style="left:740px;top:68px" width="10" height="10" viewBox="0 0 10 10" fill="none" stroke="#b8b8b8" stroke-width=".9"><path d="M2 7.500l4-5 2.500 2-4 5zM1 9.500h5"/></svg>
<div class="abs t" style="left:751.5px;top:66px;color:#b0b0b0;font-size:7.500px;letter-spacing:-0.200px">Ефекти для фігур&nbsp; ˅</div>
<svg class="abs" style="left:827px;top:39px" width="12" height="40" viewBox="0 0 12 40" fill="none" stroke="#3f6fb0" stroke-width="1.200"><circle cx="7" cy="5" r="3"/><path d="M4.800 7.300l-3.300 3.500"/><g stroke="#666" stroke-width=".8"><path d="M2 18h4M2 22h4M7.500 17.500l2 2-2 2M2 20h7"/><path d="M4 30l0 8 2-2 1.500 3 1-.5-1.500-3h2.500z" fill="#fff"/></g></svg>
<div class="abs t" style="left:841px;top:38px;color:#4a4a4a;font-size:7.500px;letter-spacing:-0.200px">Знайти</div>
<div class="abs t" style="left:841px;top:52px;color:#4a4a4a;font-size:7.500px;letter-spacing:-0.200px">Замінити</div>
<div class="abs t" style="left:841px;top:66px;color:#4a4a4a;font-size:7.500px;letter-spacing:-0.200px">Виділити</div>
<svg class="abs" style="left:876px;top:57.5px" width="6" height="4" viewBox="0 0 6 4" fill="none" stroke="#777" stroke-width=".8"><path d="M1 1l2 2 2-2"/></svg>
<svg class="abs" style="left:871.5px;top:71.5px" width="6" height="4" viewBox="0 0 6 4" fill="none" stroke="#777" stroke-width=".8"><path d="M1 1l2 2 2-2"/></svg>
<svg class="abs" style="left:902px;top:84px" width="9" height="6" viewBox="0 0 9 6" fill="none" stroke="#666" stroke-width="1"><path d="M1 5l3.500-3.500L8 5"/></svg>
<div class="abs" style="left:0px;top:92px;width:142px;height:381px;background:#e6e6e6"></div>
<div class="abs" style="left:133px;top:94px;width:8.5px;height:379px;background:#e0e0e0"></div>
<div class="abs" style="left:133px;top:104px;width:8.5px;height:238px;background:#fdfdfd;border:1px solid #d6d6d6"></div>
<div class="abs" style="left:133px;top:94.5px;width:8.5px;height:9.5px;background:#fafafa;border:1px solid #d6d6d6"></div>
<div class="abs" style="left:133px;top:462px;width:8.5px;height:9.5px;background:#fafafa;border:1px solid #d6d6d6"></div>
<svg class="abs" style="left:134.5px;top:97px" width="6" height="5" viewBox="0 0 6 5" fill="#555"><path d="M.5 4h5L3 1z"/></svg>
<svg class="abs" style="left:134.5px;top:464.5px" width="6" height="5" viewBox="0 0 6 5" fill="#555"><path d="M.5 1h5L3 4z"/></svg>
<div class="abs" style="left:142px;top:92px;width:1px;height:381px;background:#d4d4d4"></div>
<div class="abs t" style="left:5.5px;top:99.5px;color:#c0392b;font-size:10.500px">1</div>
<div class="abs t" style="left:5.5px;top:168px;color:#666;font-size:10.500px">2</div>
<div class="abs t" style="left:5.5px;top:237px;color:#666;font-size:10.500px">3</div>
<div class="abs t" style="left:5.5px;top:305.5px;color:#666;font-size:10.500px">4</div>
<div class="abs t" style="left:5.5px;top:374px;color:#666;font-size:10.500px">5</div>
<div class="abs t" style="left:5.5px;top:442.5px;color:#666;font-size:10.500px">6</div>
<div class="abs th" style="left:19.3px;top:101.5px;width:102.5px;height:60px;background:#f2f2f2;border:2px solid #8b1a10;overflow:hidden"><i style="left:14px;top:0px;width:1px;height:26px;background:#fec104"></i><svg style="position:absolute;left:10.5px;top:24.3px" width="7.4" height="7.4" viewBox="0 0 10 10"><circle cx="5" cy="5" r="5" fill="#fec104"/><circle cx="5" cy="5" r="2.600" fill="none" stroke="#222" stroke-width="1.300"/></svg><i style="left:19.2px;top:23px;width:29.2px;height:3px;background:#fec104"></i><i style="left:19.5px;top:23.7px;width:28.5px;height:1.6px;background:#6a5510"></i><i style="left:19.2px;top:30.5px;width:56px;height:1px;background:#555"></i><i style="left:19.2px;top:33.8px;width:65.8px;height:1px;background:#555"></i><i style="left:0;top:49.500px;width:99px;height:7px;background:#fec104"></i><i style="left:71.900px;top:38.400px;width:27px;height:11.100px;background:#c6c6c6"></i><i style="left:71.900px;top:49.500px;width:27px;height:7px;background:#cf9f10"></i></div>
<div class="abs th" style="left:20.5px;top:172px;width:100px;height:57px;overflow:hidden"><i style="left:0;top:0;width:100px;height:57px;border:4px solid #fec104;border-top-width:3.500px;border-bottom-width:5px;background:#f4f4f4"></i><svg style="position:absolute;left:6px;top:5.3px" width="7.5" height="7.5" viewBox="0 0 10 10"><circle cx="5" cy="5" r="5" fill="#fec104"/><circle cx="5" cy="5" r="2.600" fill="none" stroke="#222" stroke-width="1.300"/></svg><i style="left:15.7px;top:7px;width:36px;height:1.4px;background:#333"></i><i style="left:15.7px;top:10.2px;width:34px;height:1.4px;background:#333"></i><i style="left:15px;top:14px;width:1px;height:38px;background:#fec104"></i><i style="left:65.5px;top:12.2px;width:23.5px;height:0.8px;background:#fec104"></i><i style="left:84.300px;top:.5px;width:15.700px;height:15px;background:#c8c4b4;opacity:.8"></i><i style="left:34px;top:19px;width:28px;height:0.8px;background:#9c9c9c"></i><i style="left:34px;top:26px;width:25px;height:0.8px;background:#9c9c9c"></i><i style="left:34px;top:33px;width:16px;height:0.8px;background:#9c9c9c"></i><i style="left:34px;top:40px;width:21px;height:0.8px;background:#9c9c9c"></i><i style="left:34px;top:47px;width:37px;height:0.8px;background:#9c9c9c"></i></div>
<div class="abs th" style="left:20.5px;top:241px;width:100px;height:56.5px;background:#f4f4f4;overflow:hidden"><i style="left:0;top:0;width:100px;height:6.500px;background:#fec104"></i><i style="left:82.700px;top:0;width:17.300px;height:16px;background:#cfcbbd"></i><i style="left:82.700px;top:0;width:17.300px;height:6.500px;background:#d8a818"></i><svg style="position:absolute;left:7px;top:2.3px" width="7.6" height="7.6" viewBox="0 0 10 10"><circle cx="5" cy="5" r="5" fill="#fec104"/><circle cx="5" cy="5" r="2.600" fill="none" stroke="#222" stroke-width="1.300"/></svg><i style="left:18px;top:4.2px;width:26px;height:1.3px;background:#4a3c00"></i><i style="left:65px;top:15px;width:17px;height:0.8px;background:#fec104"></i><i style="left:3px;top:50px;width:31px;height:0.8px;background:#fec104"></i><i style="left:4px;top:16.5px;width:17px;height:0.8px;background:#9c9c9c"></i><i style="left:4px;top:19.7px;width:38px;height:0.8px;background:#9c9c9c"></i><i style="left:4px;top:22.9px;width:34px;height:0.8px;background:#9c9c9c"></i><i style="left:6px;top:26.1px;width:14px;height:0.8px;background:#9c9c9c"></i><i style="left:4px;top:29.3px;width:45px;height:0.8px;background:#9c9c9c"></i><i style="left:4px;top:32.5px;width:46px;height:0.8px;background:#9c9c9c"></i><i style="left:6px;top:35.7px;width:43px;height:0.8px;background:#9c9c9c"></i><i style="left:4px;top:38.900000000000006px;width:45px;height:0.8px;background:#9c9c9c"></i><i style="left:6px;top:42.1px;width:42px;height:0.8px;background:#9c9c9c"></i><i style="left:52px;top:20px;width:23.500px;height:30px;background:linear-gradient(160deg,#d8c6ae 0,#c98d5c 35%,#b9a999 60%,#8f8a86 100%)"></i><i style="left:77.500px;top:20px;width:21px;height:30px;background:linear-gradient(200deg,#7fb9e6 0,#9cc9ea 40%,#c99873 60%,#8fb5d5 100%)"></i></div>
<div class="abs th" style="left:20.5px;top:309.5px;width:100px;height:56.5px;background:#f4f4f4;overflow:hidden"><i style="left:0;top:0;width:100px;height:6.500px;background:#fec104"></i><i style="left:82.700px;top:0;width:17.300px;height:16px;background:#cfcbbd"></i><i style="left:82.700px;top:0;width:17.300px;height:6.500px;background:#d8a818"></i><svg style="position:absolute;left:7px;top:2.3px" width="7.6" height="7.6" viewBox="0 0 10 10"><circle cx="5" cy="5" r="5" fill="#fec104"/><circle cx="5" cy="5" r="2.600" fill="none" stroke="#222" stroke-width="1.300"/></svg><i style="left:18px;top:4.2px;width:20px;height:1.3px;background:#4a3c00"></i><i style="left:65px;top:15px;width:17px;height:0.8px;background:#fec104"></i><i style="left:3px;top:50px;width:31px;height:0.8px;background:#fec104"></i><i style="left:4px;top:19.5px;width:42px;height:0.8px;background:#9c9c9c"></i><i style="left:4px;top:23.3px;width:40px;height:0.8px;background:#9c9c9c"></i><i style="left:6px;top:27.1px;width:38px;height:0.8px;background:#9c9c9c"></i><i style="left:6px;top:30.9px;width:36px;height:0.8px;background:#9c9c9c"></i><i style="left:4px;top:34.7px;width:12px;height:0.8px;background:#9c9c9c"></i><i style="left:6px;top:38.5px;width:34px;height:0.8px;background:#9c9c9c"></i><i style="left:4px;top:42.3px;width:40px;height:0.8px;background:#9c9c9c"></i><i style="left:6px;top:46.099999999999994px;width:30px;height:0.8px;background:#9c9c9c"></i><i style="left:46.500px;top:17px;width:25px;height:18.500px;background:linear-gradient(135deg,#c8702a 0,#e08a3a 30%,#8a4a20 55%,#d98232 80%,#7a4a28 100%)"></i><i style="left:72.500px;top:17px;width:26px;height:18.500px;background:linear-gradient(135deg,#3f4238 0,#5a5a48 40%,#c9a020 65%,#3a3a34 100%)"></i><i style="left:54px;top:37.500px;width:10px;height:11px;border:2px solid #8c92a8;border-radius:50%;background:#fff"></i><i style="left:76px;top:38px;width:9px;height:11px;background:#ececec;border:1px solid #dcdcdc"></i></div>
<div class="abs th" style="left:20.5px;top:378.3px;width:100px;height:56.5px;background:#f4f4f4;overflow:hidden"><i style="left:0;top:0;width:100px;height:6.500px;background:#fec104"></i><i style="left:82.700px;top:0;width:17.300px;height:16px;background:#cfcbbd"></i><i style="left:82.700px;top:0;width:17.300px;height:6.500px;background:#d8a818"></i><svg style="position:absolute;left:7px;top:2.3px" width="7.6" height="7.6" viewBox="0 0 10 10"><circle cx="5" cy="5" r="5" fill="#fec104"/><circle cx="5" cy="5" r="2.600" fill="none" stroke="#222" stroke-width="1.300"/></svg><i style="left:18px;top:4.2px;width:15px;height:1.3px;background:#4a3c00"></i><i style="left:65px;top:15px;width:17px;height:0.8px;background:#fec104"></i><i style="left:3px;top:50px;width:31px;height:0.8px;background:#fec104"></i><i style="left:2px;top:13px;width:31px;height:23px;background:linear-gradient(180deg,#6a6a66 0,#4a4a48 50%,#77726a 100%)"></i><i style="left:22.500px;top:25px;width:33px;height:24px;background:linear-gradient(180deg,#9fc3e0 0,#c7d6df 35%,#d9b33a 55%,#6d7a82 80%,#3f4a50 100%)"></i><i style="left:63px;top:22.5px;width:30px;height:0.8px;background:#666"></i><i style="left:65px;top:25.6px;width:22px;height:0.8px;background:#666"></i><i style="left:63px;top:28.7px;width:28px;height:0.8px;background:#666"></i><i style="left:65px;top:31.8px;width:26px;height:0.8px;background:#666"></i><i style="left:63px;top:34.9px;width:36px;height:0.8px;background:#666"></i><i style="left:63px;top:38.0px;width:27px;height:0.8px;background:#666"></i></div>
<div class="abs th" style="left:20.5px;top:447px;width:100px;height:26px;background:#f4f4f4;overflow:hidden"><i style="left:0;top:0;width:100px;height:6.500px;background:#fec104"></i><i style="left:82.700px;top:0;width:17.300px;height:16px;background:#cfcbbd"></i><i style="left:82.700px;top:0;width:17.300px;height:6.500px;background:#d8a818"></i><svg style="position:absolute;left:7px;top:2.3px" width="7.6" height="7.6" viewBox="0 0 10 10"><circle cx="5" cy="5" r="5" fill="#fec104"/><circle cx="5" cy="5" r="2.600" fill="none" stroke="#222" stroke-width="1.300"/></svg><i style="left:18px;top:4.2px;width:30px;height:1.3px;background:#4a3c00"></i><i style="left:65px;top:15px;width:17px;height:0.8px;background:#fec104"></i><i style="left:3px;top:50px;width:31px;height:0.8px;background:#fec104"></i><i style="left:64px;top:9px;width:34px;height:18px;background:linear-gradient(180deg,#cfd6da 0,#8c8f8a 60%,#6a6a60 100%)"></i></div>
<div class="abs" style="left:143px;top:92px;width:762px;height:358px;background:#e7e7e7"></div>
<div class="abs" style="left:905px;top:92px;width:11px;height:327px;background:#dcdcdc"></div>
<div class="abs" style="left:905.5px;top:124px;width:10px;height:33px;background:#fdfdfd;border:1px solid #cfcfcf"></div>
<div class="abs" style="left:905.5px;top:93px;width:10px;height:9.5px;background:#fafafa;border:1px solid #d6d6d6"></div>
<svg class="abs" style="left:907.5px;top:95.5px" width="6" height="5" viewBox="0 0 6 5" fill="#555"><path d="M.5 4h5L3 1z"/></svg>
<div class="abs" style="left:905.5px;top:409px;width:10px;height:9.5px;background:#fafafa;border:1px solid #d6d6d6"></div>
<svg class="abs" style="left:907.5px;top:411.5px" width="6" height="5" viewBox="0 0 6 5" fill="#555"><path d="M.5 1h5L3 4z"/></svg>
<svg class="abs" style="left:907px;top:420px" width="8" height="22" viewBox="0 0 8 22" fill="#666"><path d="M1.500 3.500h5L4 1zM1.500 6.500h5L4 4zM1.500 14h5L4 16.500zM1.500 17h5L4 19.500z"/></svg>
<div class="abs" style="left:217.5px;top:93px;width:616.5px;height:351px;background:#f4f4f4;overflow:hidden"><div class="abs" style="left:.5px;top:4px;width:616px;height:347px"><div class="abs" style="left:87.600px;top:0;width:1.400px;height:153px;background:#fec104"></div><svg class="abs" style="left:63px;top:152.500px" width="51" height="51" viewBox="0 0 51 51"><circle cx="25.500" cy="25.500" r="25.500" fill="#fec104"/><g fill="none" stroke="#161616" stroke-width="3.200"><circle cx="25.700" cy="25.700" r="17.300"/><circle cx="25.700" cy="25.700" r="10.100"/></g><path d="M25.700 25.700L41 10.500" stroke="#fec104" stroke-width="6.200"/><circle cx="25.700" cy="25.700" r="4.900" fill="#161616"/><path d="M25.700 25.700L40 11.500" stroke="#161616" stroke-width="3.200"/><path d="M36.500 11.500l4.500-5.500 1 3.500 3.500 1-5 5.200-3.500-.7z" fill="#161616" stroke="#161616" stroke-width="1" stroke-linejoin="round"/></svg><div class="abs" style="left:122px;top:140px;width:176px;height:22px;background:#fec104"></div><div class="abs st" style="left:123px;top:142px;letter-spacing:-0.350px">Виробнича практика</div><div class="abs st" style="left:122.500px;top:180px">Виконала: Єлефтеріаді Марина МІТ-221д</div><div class="abs st" style="left:122.500px;top:199px">Керівник практики: <u>к.е.н</u>., доцент <u>Глізнуца</u> М.Ю.</div><div class="abs" style="left:0;top:302.500px;width:616px;height:44.500px;background:#fec104"></div><svg class="abs" style="left:445px;top:232.500px" width="171" height="114.5" viewBox="0 0 171 114.5"><rect width="171" height="114.5" fill="rgba(0,0,0,.02)"/><path d="M1.00 0l-114.5 114.5M4.00 0l-114.5 114.5M7.00 0l-114.5 114.5M10.00 0l-114.5 114.5M13.00 0l-114.5 114.5M16.00 0l-114.5 114.5M19.00 0l-114.5 114.5M22.00 0l-114.5 114.5M25.00 0l-114.5 114.5M28.00 0l-114.5 114.5M31.00 0l-114.5 114.5M34.00 0l-114.5 114.5M37.00 0l-114.5 114.5M40.00 0l-114.5 114.5M43.00 0l-114.5 114.5M46.00 0l-114.5 114.5M49.00 0l-114.5 114.5M52.00 0l-114.5 114.5M55.00 0l-114.5 114.5M58.00 0l-114.5 114.5M61.00 0l-114.5 114.5M64.00 0l-114.5 114.5M67.00 0l-114.5 114.5M70.00 0l-114.5 114.5M73.00 0l-114.5 114.5M76.00 0l-114.5 114.5M79.00 0l-114.5 114.5M82.00 0l-114.5 114.5M85.00 0l-114.5 114.5M88.00 0l-114.5 114.5M91.00 0l-114.5 114.5M94.00 0l-114.5 114.5M97.00 0l-114.5 114.5M100.00 0l-114.5 114.5M103.00 0l-114.5 114.5M106.00 0l-114.5 114.5M109.00 0l-114.5 114.5M112.00 0l-114.5 114.5M115.00 0l-114.5 114.5M118.00 0l-114.5 114.5M121.00 0l-114.5 114.5M124.00 0l-114.5 114.5M127.00 0l-114.5 114.5M130.00 0l-114.5 114.5M133.00 0l-114.5 114.5M136.00 0l-114.5 114.5M139.00 0l-114.5 114.5M142.00 0l-114.5 114.5M145.00 0l-114.5 114.5M148.00 0l-114.5 114.5M151.00 0l-114.5 114.5M154.00 0l-114.5 114.5M157.00 0l-114.5 114.5M160.00 0l-114.5 114.5M163.00 0l-114.5 114.5M166.00 0l-114.5 114.5M169.00 0l-114.5 114.5M172.00 0l-114.5 114.5M175.00 0l-114.5 114.5M178.00 0l-114.5 114.5M181.00 0l-114.5 114.5M184.00 0l-114.5 114.5M187.00 0l-114.5 114.5M190.00 0l-114.5 114.5M193.00 0l-114.5 114.5M196.00 0l-114.5 114.5M199.00 0l-114.5 114.5M202.00 0l-114.5 114.5M205.00 0l-114.5 114.5M208.00 0l-114.5 114.5M211.00 0l-114.5 114.5M214.00 0l-114.5 114.5M217.00 0l-114.5 114.5M220.00 0l-114.5 114.5M223.00 0l-114.5 114.5M226.00 0l-114.5 114.5M229.00 0l-114.5 114.5M232.00 0l-114.5 114.5M235.00 0l-114.5 114.5M238.00 0l-114.5 114.5M241.00 0l-114.5 114.5M244.00 0l-114.5 114.5M247.00 0l-114.5 114.5M250.00 0l-114.5 114.5M253.00 0l-114.5 114.5M256.00 0l-114.5 114.5M259.00 0l-114.5 114.5M262.00 0l-114.5 114.5M265.00 0l-114.5 114.5M268.00 0l-114.5 114.5M271.00 0l-114.5 114.5M274.00 0l-114.5 114.5M277.00 0l-114.5 114.5M280.00 0l-114.5 114.5M283.00 0l-114.5 114.5" stroke="rgba(10,10,10,.55)" stroke-width=".95" fill="none"/></svg></div></div>
<div class="abs" style="left:143px;top:450px;width:773px;height:23px;background:#e7e7e7;border-top:1px solid #f4f4f4"></div>
<div class="abs t" style="left:150.5px;top:453.5px;color:#7a7a7a;font-size:8.500px;letter-spacing:0">Нотатки до слайда</div>
<div class="abs" style="left:0px;top:473px;width:916px;height:10.5px;background:#f3f3f3"></div>
<div class="abs t" style="left:5px;top:471.8px;color:#555;font-size:7.500px;letter-spacing:-0.200px">Слайд 1 з 8</div>
<svg class="abs" style="left:48px;top:474px" width="10" height="8" viewBox="0 0 10 8" fill="none" stroke="#777" stroke-width=".8"><rect x="1" y="1" width="5" height="6"/><path d="M7 2l1.500 3L9.500 1"/></svg>
<div class="abs t" style="left:67px;top:471.8px;color:#555;font-size:7.500px;letter-spacing:-0.200px">українська</div>
<svg class="abs" style="left:612px;top:474px" width="8" height="8" viewBox="0 0 8 8" fill="none" stroke="#666" stroke-width=".8"><path d="M1 6.500h6M2 4.500h4M4 1v2.500M2.500 2.500L4 1l1.500 1.500"/></svg>
<div class="abs t" style="left:621px;top:471.8px;color:#555;font-size:7.500px;letter-spacing:-0.200px">Нотатки</div>
<svg class="abs" style="left:656px;top:474px" width="9" height="8" viewBox="0 0 9 8" fill="#444"><path d="M.5 .5h8v5h-4.500l-2 2v-2h-1.500z"/></svg>
<div class="abs t" style="left:666px;top:471.8px;color:#555;font-size:7.500px;letter-spacing:-0.200px">Примітки</div>
<div class="abs" style="left:703px;top:473px;width:23px;height:10.5px;background:#c9c9c9"></div>
<svg class="abs" style="left:709.5px;top:474px" width="9" height="8" viewBox="0 0 9 8" fill="none" stroke="#777" stroke-width=".8"><rect x=".5" y=".5" width="8" height="6.500"/><path d="M.5 2.500h8M3 2.500v4.500"/></svg>
<svg class="abs" style="left:733.5px;top:474px" width="9" height="8" viewBox="0 0 9 8" fill="none" stroke="#777" stroke-width=".8"><rect x=".5" y=".5" width="8" height="6.500"/><path d="M.5 2.500h8M3 2.500v4.500"/></svg>
<svg class="abs" style="left:757.5px;top:474px" width="9" height="8" viewBox="0 0 9 8" fill="none" stroke="#777" stroke-width=".8"><rect x=".5" y=".5" width="8" height="6.500"/><path d="M.5 2.500h8M3 2.500v4.500"/></svg>
<svg class="abs" style="left:781.5px;top:474px" width="9" height="8" viewBox="0 0 9 8" fill="none" stroke="#777" stroke-width=".8"><rect x=".5" y=".5" width="8" height="6.500"/><path d="M.5 2.500h8M3 2.500v4.500"/></svg>
<div class="abs t" style="left:802px;top:471px;color:#555;font-size:9px">–</div>
<div class="abs" style="left:810px;top:478px;width:60px;height:1px;background:#9a9a9a"></div>
<div class="abs" style="left:832px;top:474.5px;width:2.5px;height:7px;background:#555"></div>
<div class="abs" style="left:840px;top:476.5px;width:1px;height:4px;background:#9a9a9a"></div>
<div class="abs t" style="left:871.5px;top:471px;color:#555;font-size:9px">+</div>
<div class="abs t" style="left:883px;top:471.8px;color:#555;font-size:7px;letter-spacing:-0.200px">81%</div>
<svg class="abs" style="left:903px;top:474px" width="9" height="8" viewBox="0 0 9 8" fill="none" stroke="#666" stroke-width=".8"><rect x=".5" y=".5" width="8" height="7"/><path d="M3 3l-1.500-1.500M6 3l1.500-1.500M3 5l-1.500 1.500M6 5l1.500 1.500"/></svg>

</div>
<div id="panel" class="abs">
<div class="abs" style="left:17px;top:18px;font-size:13.500px;font-weight:bold;color:#fff;letter-spacing:-0.200px">Участники</div>
<svg class="abs" style="left:201px;top:19px" width="50" height="14" viewBox="0 0 50 14"><g fill="#d0d0d0"><circle cx="4.500" cy="7" r="1"/><circle cx="8.500" cy="7" r="1"/><circle cx="12.500" cy="7" r="1"/></g><path d="M30.500 2l10 10M40.500 2l-10 10" stroke="#d0d0d0" stroke-width="1.200" fill="none"/></svg>
<div class="abs" style="left:0;top:50px;width:265px;height:1px;background:#333"></div>
<div class="abs" style="left:17px;top:64px;width:233px;height:27px;background:#2e2e2e;border-radius:4px 4px 3px 3px;border-bottom:2px solid #7a7fd6"><div class="abs" style="left:10px;top:7px;font-size:11.500px;color:#9a9a9a;letter-spacing:-0.200px">Введите имя</div><svg class="abs" style="left:208px;top:6px" width="14" height="14" viewBox="0 0 14 14" fill="none" stroke="#c8c8c8" stroke-width="1.300"><circle cx="5.800" cy="5.800" r="4"/><path d="M8.800 8.800l4 4"/></svg></div>
<div class="abs" style="left:17px;top:99px;width:233px;height:27px;border:1px solid #5a5a5a;border-radius:4px;background:#1f1f1f"><svg class="abs" style="left:39px;top:5px" width="16" height="16" viewBox="0 0 16 16" fill="none" stroke="#fff" stroke-width="1.200" stroke-linejoin="round"><path d="M6.500 3.500H4.500A1.500 1.500 0 0 0 3 5v6.500A1.500 1.500 0 0 0 4.500 13H11a1.500 1.500 0 0 0 1.500-1.500v-1"/><path d="M9.500 2l4 3.500-4 3.500V7C7.500 7 6.300 7.800 5.500 9.500 5.700 6.500 7 4.500 9.500 4.200z"/></svg><div class="abs" style="left:61px;top:6.500px;font-size:11.500px;font-weight:bold;color:#fff;letter-spacing:-0.200px">Отправка приглашения</div></div>
<div class="row" style="top:123.5px"><div class="a" style="background:#f5d5d9;color:#8c2d3e">ДЧ</div><div class="n" style="top:13px;letter-spacing:-0.15px">Данило Андрійович Чугаєв</div><svg width="16" height="18" viewBox="0 0 16 18" fill="none" stroke="#a6a6a6" stroke-width="1.100"><rect x="5.500" y="1.500" width="5" height="8.500" rx="2.500" fill="#a6a6a6"/><path d="M3.200 8a4.800 4.800 0 0 0 9.600 0M8 13v3"/><path d="M1.500 1l12.500 15.500" stroke="#1f1f1f" stroke-width="3.200"/><path d="M1.500 1l12.500 15.500"/></svg></div>
<div class="row" style="top:163.5px"><div class="a" style="background:#ebd2e6;color:#6d2f63">ДС</div><div class="n" style="top:13px;letter-spacing:-0.26px">Данило Олександрович Сергіє...</div><svg width="16" height="18" viewBox="0 0 16 18" fill="none" stroke="#a6a6a6" stroke-width="1.100"><rect x="5.500" y="1.500" width="5" height="8.500" rx="2.500" fill="#a6a6a6"/><path d="M3.200 8a4.800 4.800 0 0 0 9.600 0M8 13v3"/><path d="M1.500 1l12.500 15.500" stroke="#1f1f1f" stroke-width="3.200"/><path d="M1.500 1l12.500 15.500"/></svg></div>
<div class="row" style="top:203.5px"><div class="a" style="background:#d2e6da;color:#2e5a3e">ДМ</div><div class="n" style="top:13px;letter-spacing:-0.19px">Денис Костянтинович Малий</div><svg width="16" height="18" viewBox="0 0 16 18" fill="none" stroke="#a6a6a6" stroke-width="1.100"><rect x="5.500" y="1.500" width="5" height="8.500" rx="2.500" fill="#a6a6a6"/><path d="M3.200 8a4.800 4.800 0 0 0 9.600 0M8 13v3"/><path d="M1.500 1l12.500 15.500" stroke="#1f1f1f" stroke-width="3.200"/><path d="M1.500 1l12.500 15.500"/></svg></div>
<div class="row" style="top:243.5px"><div class="a" style="background:#d3dff1;color:#2a4a7c">ЄГ</div><div class="n" style="top:13px;letter-spacing:-0.38px">Єлизавета Сергіївна Гаркуша</div><svg width="16" height="18" viewBox="0 0 16 18" fill="none" stroke="#a6a6a6" stroke-width="1.100"><rect x="5.500" y="1.500" width="5" height="8.500" rx="2.500" fill="#a6a6a6"/><path d="M3.200 8a4.800 4.800 0 0 0 9.600 0M8 13v3"/><path d="M1.500 1l12.500 15.500" stroke="#1f1f1f" stroke-width="3.200"/><path d="M1.500 1l12.500 15.500"/></svg></div>
<div class="row" style="top:283.5px"><div class="a" style="background:#f6d6cd;color:#8c3222">ІВ</div><div class="n" style="top:13px;letter-spacing:-0.23px">Ілля Сергійович Виноградов</div><svg width="16" height="18" viewBox="0 0 16 18" fill="none" stroke="#a6a6a6" stroke-width="1.100"><rect x="5.500" y="1.500" width="5" height="8.500" rx="2.500" fill="#a6a6a6"/><path d="M3.200 8a4.800 4.800 0 0 0 9.600 0M8 13v3"/><path d="M1.500 1l12.500 15.500" stroke="#1f1f1f" stroke-width="3.200"/><path d="M1.500 1l12.500 15.500"/></svg></div>
<div class="row" style="top:323.5px"><div class="a" style="overflow:hidden"><svg width="100%" height="100%" viewBox="0 0 27 27" style="display:block"><defs><filter id="bl3" x="-20%" y="-20%" width="140%" height="140%"><feGaussianBlur stdDeviation=".7"/></filter><clipPath id="cc3"><circle cx="13.500" cy="13.500" r="13.500"/></clipPath></defs><g clip-path="url(#cc3)"><rect width="27" height="27" fill="#6f6a5c"/><g filter="url(#bl3)"><rect x="0" y="8" width="7" height="12" fill="#b7994f"/><rect x="20" y="3" width="8" height="17" fill="#aab4aa"/><rect x="-1" y="20" width="29" height="8" fill="#1c1a1a"/><path d="M13.500 1.500c-5 0-7.500 3.500-7.500 9 0 4-.5 8 0 12h15c.5-4 0-8 0-12 0-5.500-2.500-9-7.500-9z" fill="#3b1612"/><ellipse cx="13.500" cy="15.500" rx="5.800" ry="7" fill="#e0b0a2"/><path d="M7 11c2-2 10-2 13 0v-3H7z" fill="#4a1c15"/><rect x="11.500" y="23.500" width="4" height="3" fill="#d8d4d0"/></g></g></svg></div><div class="n" style="top:13px;letter-spacing:-0.25px">Ірина Віталіївна Костяник</div><svg width="16" height="18" viewBox="0 0 16 18" fill="none" stroke="#a6a6a6" stroke-width="1.100"><rect x="5.500" y="1.500" width="5" height="8.500" rx="2.500" fill="#a6a6a6"/><path d="M3.200 8a4.800 4.800 0 0 0 9.600 0M8 13v3"/><path d="M1.500 1l12.500 15.500" stroke="#1f1f1f" stroke-width="3.200"/><path d="M1.500 1l12.500 15.500"/></svg></div>
<div class="row" style="top:363.5px"><div class="a" style="background:#dee5d8;color:#3c5128">МЄ</div><div class="n" style="top:13px;letter-spacing:-0.33px">Марина Дмитрівна Єлефтеріаді</div><svg width="16" height="18" viewBox="0 0 16 18" fill="none" stroke="#e6e6e6" stroke-width="1.200"><rect x="5.300" y="1.500" width="5.400" height="8.800" rx="2.700" fill="#e6e6e6"/><path d="M3.200 8a4.800 4.800 0 0 0 9.600 0M8 13v3"/></svg></div>
<div class="row" style="top:403.5px"><div class="a" style="background:#eed3e6;color:#7b2f67">МГ</div><div class="n" style="top:13px;letter-spacing:-0.2px">Марина Юріївна Глізнуца</div><svg width="16" height="18" viewBox="0 0 16 18" fill="none" stroke="#a6a6a6" stroke-width="1.100"><rect x="5.500" y="1.500" width="5" height="8.500" rx="2.500" fill="#a6a6a6"/><path d="M3.200 8a4.800 4.800 0 0 0 9.600 0M8 13v3"/><path d="M1.500 1l12.500 15.500" stroke="#1f1f1f" stroke-width="3.200"/><path d="M1.500 1l12.500 15.500"/></svg></div>
<div class="row" style="top:443.5px"><div class="a" style="background:#cfe8dc;color:#2b5944">ОО</div><div class="n" style="top:13px;letter-spacing:-0.08px">Олег Ігорович Овчаренко</div><svg width="16" height="18" viewBox="0 0 16 18" fill="none" stroke="#a6a6a6" stroke-width="1.100"><rect x="5.500" y="1.500" width="5" height="8.500" rx="2.500" fill="#a6a6a6"/><path d="M3.200 8a4.800 4.800 0 0 0 9.600 0M8 13v3"/><path d="M1.500 1l12.500 15.500" stroke="#1f1f1f" stroke-width="3.200"/><path d="M1.500 1l12.500 15.500"/></svg></div>
<div class="row" style="top:483.5px"><div class="a" style="background:#faeacb;color:#7b5311">ОБ</div><div class="n" style="top:13px;letter-spacing:-0.16px">Олександр Вікторович Бомбін</div><svg width="16" height="18" viewBox="0 0 16 18" fill="none" stroke="#a6a6a6" stroke-width="1.100"><rect x="5.500" y="1.500" width="5" height="8.500" rx="2.500" fill="#a6a6a6"/><path d="M3.200 8a4.800 4.800 0 0 0 9.600 0M8 13v3"/><path d="M1.500 1l12.500 15.500" stroke="#1f1f1f" stroke-width="3.200"/><path d="M1.500 1l12.500 15.500"/></svg></div>
<div class="row" style="top:523.5px"><div class="a" style="overflow:hidden"><svg width="100%" height="100%" viewBox="0 0 58 58" style="display:block"><defs><filter id="bl4" x="-20%" y="-20%" width="140%" height="140%"><feGaussianBlur stdDeviation=".8"/></filter><clipPath id="cc4"><circle cx="29" cy="29" r="29"/></clipPath></defs><g clip-path="url(#cc4)"><rect width="58" height="58" fill="#38532a"/><g filter="url(#bl4)"><ellipse cx="8" cy="22" rx="6" ry="12" fill="#557f38"/><ellipse cx="16" cy="8" rx="6" ry="5" fill="#6f9650"/><ellipse cx="18" cy="6" rx="2" ry="2" fill="#cfe0c0"/><ellipse cx="4" cy="36" rx="4" ry="8" fill="#35551f"/><ellipse cx="50" cy="14" rx="7" ry="8" fill="#55803a"/><ellipse cx="55" cy="30" rx="4" ry="10" fill="#3f6327"/><path d="M30 2c-8 0-12 5-14 13-2 8-7 14-10 23-2 7 2 15 8 18h31c7-3 12-10 10-18-2-9-6-14-8-22C45 7 38 2 30 2z" fill="#341b13"/><ellipse cx="14" cy="40" rx="6" ry="9" fill="#41241a"/><ellipse cx="46" cy="40" rx="6" ry="10" fill="#41231a"/><path d="M22 36h17l2 18H20z" fill="#5d5c66"/><path d="M13 59c2-5 7-7.500 9.500-7.500 3 3.500 13 3.500 16.500 0 4 0 8 2.500 9.500 7.500z" fill="#3fb7d4"/><ellipse cx="31" cy="25.500" rx="9.300" ry="13.500" fill="#d9a590"/><ellipse cx="31" cy="21" rx="8" ry="6" fill="#e2b39f"/><ellipse cx="27" cy="22.500" rx="2" ry=".9" fill="#6b4034"/><ellipse cx="35.500" cy="22.500" rx="2" ry=".9" fill="#6b4034"/><ellipse cx="31.500" cy="32" rx="2.500" ry="1" fill="#b8705f"/></g></g></svg></div><div class="n" style="top:6px;letter-spacing:-0.16px">Ольга Володимирівна Турчин</div><div class="abs" style="left:50px;top:22px;font-size:10.500px;color:#9a9a9a;letter-spacing:-0.230px">Инициатор</div><svg width="16" height="18" viewBox="0 0 16 18" fill="none" stroke="#a6a6a6" stroke-width="1.100"><rect x="5.500" y="1.500" width="5" height="8.500" rx="2.500" fill="#a6a6a6"/><path d="M3.200 8a4.800 4.800 0 0 0 9.600 0M8 13v3"/><path d="M1.500 1l12.500 15.500" stroke="#1f1f1f" stroke-width="3.200"/><path d="M1.500 1l12.500 15.500"/></svg></div>
<div class="row" style="top:563.5px"><div class="a" style="background:#f8dad2;color:#8c2b16">ОВ</div><div class="n" style="top:13px;letter-spacing:-0.21px">Орина Геннадіївна Воробйова</div><svg width="16" height="18" viewBox="0 0 16 18" fill="none" stroke="#a6a6a6" stroke-width="1.100"><rect x="5.500" y="1.500" width="5" height="8.500" rx="2.500" fill="#a6a6a6"/><path d="M3.200 8a4.800 4.800 0 0 0 9.600 0M8 13v3"/><path d="M1.500 1l12.500 15.500" stroke="#1f1f1f" stroke-width="3.200"/><path d="M1.500 1l12.500 15.500"/></svg></div>
</div>
<div class="abs" style="left:10.500px;top:656px;width:155px;height:20px;border-radius:4px;background:rgba(58,58,58,.74)"><div class="abs" style="left:5.500px;top:4.500px;font-size:10px;color:#fff;white-space:nowrap;letter-spacing:-0.170px">Марина Дмитрівна Єлефтеріаді</div></div>
<div class="abs" style="left:0;top:682px;width:1015px;height:2px;background:#0f0f0f"></div>
</body>
</html>
